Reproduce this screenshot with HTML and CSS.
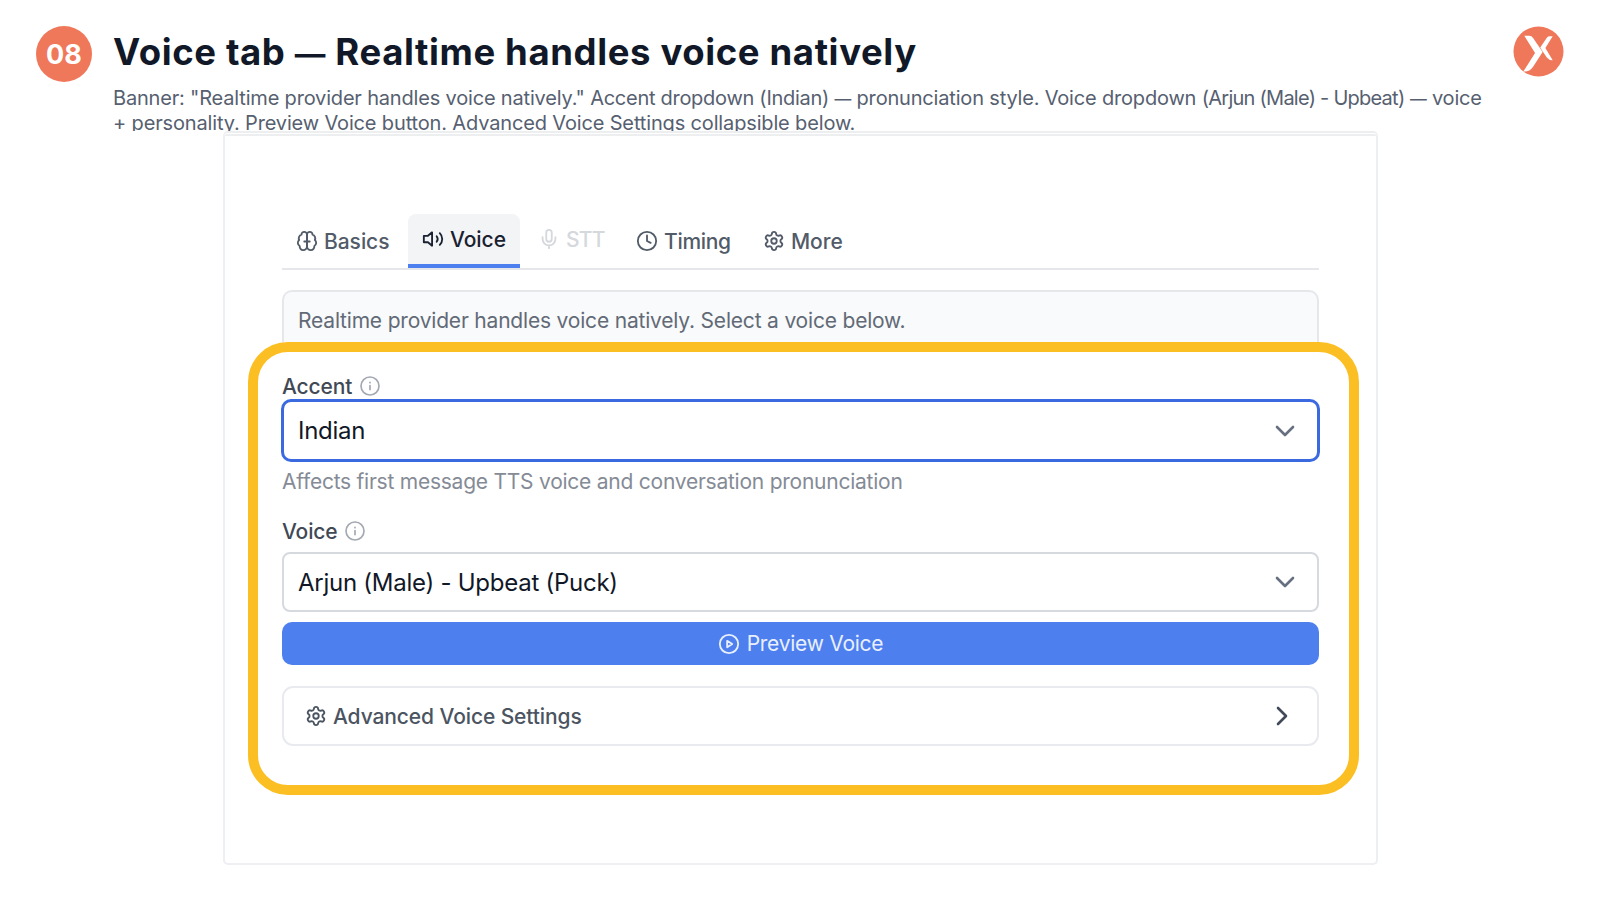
FILE: index.html
```
<!DOCTYPE html>
<html lang="en">

<head>
    <meta charset="UTF-8">
    <meta name="viewport" content="width=device-width, initial-scale=1.0">
    <title>Voice tab</title>
    <link rel="stylesheet" href="styles.css">
</head>

<body>
    <header class="header">
        <div class="step">08</div>
        <div class="heading">
            <h1>Voice tab <span class="dash">—</span> Realtime handles voice natively</h1>
            <p class="subtitle">
                <span class="line">Banner: "Realtime provider handles voice natively." <span class="tight">Accent dropdown (Indian)</span> <span class="dash">—</span> pronunciation style. Voice dropdown <span class="tighter">(Arjun (Male) - Upbeat)</span> <span class="dash">—</span> voice</span>
                <span class="line second">+ personality. Preview Voice button. Advanced Voice Settings collapsible below.</span>
            </p>
        </div>
        <svg class="logo" viewBox="0 0 52 52">
            <circle cx="26" cy="26" r="25.5" fill="#f0785a" />
            <path d="M11.5 10H16.5Q19 10 20.5 12.2L30.2 26.500 20.500 41.5Q17 46.500 12 46.500H10.500L22.500 27.500Z" fill="#fff" />
            <path d="M40.500 10.500H37.500Q35.500 10.500 34.500 12L27.800 22 30 25.500 34.500 32Q37 35 40.500 35L33 22.500Z" fill="#fff" />
        </svg>
    </header>

    <main class="frame">
        <nav class="tabs">
            <a class="tab basics">
                <svg class="icon" viewBox="0 0 24 24">
                    <path d="M12 5a3 3 0 1 0-5.997.125 4 4 0 0 0-2.526 5.770 4 4 0 0 0 .556 6.588A4 4 0 1 0 12 18Z" />
                    <path d="M12 5a3 3 0 1 1 5.997.125 4 4 0 0 1 2.526 5.770 4 4 0 0 1-.556 6.588A4 4 0 1 1 12 18Z" />
                    <path d="M12 5v13M9 12.500h6" />
                </svg>
                <span>Basics</span>
            </a>
            <a class="tab voice active">
                <svg class="icon" viewBox="0 0 24 24">
                    <path d="M11 4.700 6.500 8.500H2v7h4.500L11 19.300Z" />
                    <path d="M16 9a5 5 0 0 1 0 6M19.400 5.600a9 9 0 0 1 0 12.800" />
                </svg>
                <span>Voice</span>
            </a>
            <a class="tab stt disabled">
                <svg class="icon" viewBox="0 0 24 24">
                    <rect x="9" y="2" width="6" height="13" rx="3" />
                    <path d="M19 10v2a7 7 0 0 1-14 0v-2M12 19v3" />
                </svg>
                <span>STT</span>
            </a>
            <a class="tab timing">
                <svg class="icon" viewBox="0 0 24 24">
                    <circle cx="12" cy="12" r="10" />
                    <path d="M12 6v6l4 2" />
                </svg>
                <span>Timing</span>
            </a>
            <a class="tab more">
                <svg class="icon" viewBox="0 0 24 24">
                    <path d="M9.671 4.136a2.340 2.340 0 0 1 4.659 0 2.340 2.340 0 0 0 3.319 1.915 2.340 2.340 0 0 1 2.330 4.033 2.340 2.340 0 0 0 0 3.831 2.340 2.340 0 0 1-2.330 4.033 2.340 2.340 0 0 0-3.319 1.915 2.340 2.340 0 0 1-4.659 0 2.340 2.340 0 0 0-3.320-1.915 2.340 2.340 0 0 1-2.330-4.033 2.340 2.340 0 0 0 0-3.831A2.340 2.340 0 0 1 6.350 6.051a2.340 2.340 0 0 0 3.319-1.915" />
                    <circle cx="12" cy="12" r="3" />
                </svg>
                <span>More</span>
            </a>
        </nav>

        <div class="banner">Realtime provider handles voice natively. Select a voice below.</div>

        <section class="highlight">
            <div class="label">
                <span>Accent</span>
                <svg class="icon info" viewBox="0 0 24 24">
                    <circle cx="12" cy="12" r="10.800" />
                    <path d="M12 11.500v5M12 7.500v.5" />
                </svg>
            </div>
            <div class="select focused">
                <span>Indian</span>
                <svg class="chevron" viewBox="0 0 20 12"><path d="M2 2l8 8 8-8" /></svg>
            </div>
            <p class="help">Affects first message TTS voice and conversation pronunciation</p>

            <div class="label">
                <span>Voice</span>
                <svg class="icon info" viewBox="0 0 24 24">
                    <circle cx="12" cy="12" r="10.800" />
                    <path d="M12 11.500v5M12 7.500v.5" />
                </svg>
            </div>
            <div class="select voice-select">
                <span>Arjun (Male) - Upbeat (Puck)</span>
                <svg class="chevron" viewBox="0 0 20 12"><path d="M2 2l8 8 8-8" /></svg>
            </div>

            <button class="preview">
                <svg class="icon" viewBox="0 0 24 24">
                    <circle cx="12" cy="12" r="10" />
                    <path d="M10 8.500l5.500 3.500-5.500 3.500Z" />
                </svg>
                <span>Preview Voice</span>
            </button>

            <div class="advanced">
                <svg class="icon" viewBox="0 0 24 24">
                    <path d="M9.671 4.136a2.340 2.340 0 0 1 4.659 0 2.340 2.340 0 0 0 3.319 1.915 2.340 2.340 0 0 1 2.330 4.033 2.340 2.340 0 0 0 0 3.831 2.340 2.340 0 0 1-2.330 4.033 2.340 2.340 0 0 0-3.319 1.915 2.340 2.340 0 0 1-4.659 0 2.340 2.340 0 0 0-3.320-1.915 2.340 2.340 0 0 1-2.330-4.033 2.340 2.340 0 0 0 0-3.831A2.340 2.340 0 0 1 6.350 6.051a2.340 2.340 0 0 0 3.319-1.915" />
                    <circle cx="12" cy="12" r="3" />
                </svg>
                <span>Advanced Voice Settings</span>
                <svg class="arrow" viewBox="0 0 12 20"><path d="M2 2l8 8-8 8" /></svg>
            </div>
        </section>
    </main>
</body>

</html>
```
FILE: styles.css
```
* {
    box-sizing: border-box;
}

body {
    margin: 0;
    height: 900px;
    overflow: hidden;
    background-color: #fff;
    font-family: Inter, "Liberation Sans", sans-serif;
    color: #111827;
}

h1,
p {
    margin: 0;
}

.header {
    display: flex;
    height: 131px;
    padding: 26px 36px 0;
    overflow: hidden;
}

.step {
    display: flex;
    flex: none;
    justify-content: center;
    align-items: center;
    width: 56px;
    height: 56px;
    border-radius: 50%;
    background-color: #f0785a;
    color: #fff;
    font-size: 27px;
    font-weight: 700;
}

.heading {
    flex: 1;
    min-width: 0;
    padding-left: 21px;
    white-space: nowrap;
}

h1 {
    height: 60px;
    font-size: 36.5px;
    line-height: 52px;
    font-weight: 700;
    letter-spacing: 0.62px;
}

.dash {
    font-size: 0.84em;
    line-height: 1;
}

.subtitle {
    font-size: 20px;
    line-height: 25px;
    letter-spacing: -0.18px;
    color: #566070;
}

.line {
    display: block;
    height: 25px;
}

.second {
    letter-spacing: -0.15px;
}

.tight {
    letter-spacing: -0.28px;
}

.tighter {
    letter-spacing: -0.75px;
}

.logo {
    flex: none;
    width: 51px;
    height: 51px;
}

/* panel */
.frame {
    width: 1155px;
    height: 734px;
    margin: 0 0 0 223px;
    padding: 78px 24px 0 23px;
    border: 2px solid #eeeff3;
    border-radius: 5px;
    border-top: 5px double #eceef0;
}

.tabs {
    display: flex;
    height: 56px;
    margin: 0 33px 0 34px;
    border-bottom: 2px solid #e5e7eb;
}

.tab {
    display: flex;
    align-items: center;
    height: 54px;
    gap: 6px;
    font-size: 21px;
    font-weight: 500;
    letter-spacing: -0.05px;
    color: #525b68;
}

.icon {
    flex: none;
    width: 22px;
    height: 22px;
    fill: none;
    stroke: currentColor;
    stroke-width: 2;
    stroke-linecap: round;
    stroke-linejoin: round;
}

.basics {
    padding-left: 14px;
    width: 126px;
}

.voice {
    padding-left: 14px;
    width: 112px;
}

.active {
    border-bottom: 4px solid #4d80ee;
    border-radius: 8px 8px 0 0;
    background-color: #f3f4f6;
    color: #1a2130;
}

.stt {
    padding: 0 0 4px 18px;
    width: 116px;
    letter-spacing: -0.8px;
}

.disabled {
    color: #d5d8dc;
}

.timing {
    width: 127px;
    letter-spacing: -0.3px;
}

.banner {
    height: 52px;
    margin: 20px 33px 0 34px;
    padding: 0 14px;
    border: 2px solid #e5e7eb;
    border-bottom: 0;
    border-radius: 10px 10px 0 0;
    background-color: #f9fafb;
    font-size: 21px;
    line-height: 58px;
    letter-spacing: -0.19px;
    color: #626a77;
}

.highlight {
    width: 1111px;
    height: 453px;
    padding: 21px 30px 0 24px;
    border: 10px solid #fbbf24;
    border-radius: 40px;
}

.label {
    display: flex;
    align-items: center;
    gap: 8px;
    height: 26px;
    font-size: 21px;
    font-weight: 500;
    letter-spacing: -0.15px;
    color: #414955;
}

.info {
    width: 20px;
    height: 20px;
    color: #a3a8b2;
}

.select {
    display: flex;
    justify-content: space-between;
    align-items: center;
    height: 60px;
    padding: 0 22px 0 14px;
    border: 2px solid #d6d9de;
    border-radius: 8px;
    font-size: 24px;
    letter-spacing: -0.26px;
}

.focused {
    height: 63px;
    margin: 0 -1px;
    border: 3px solid #3b6ae0;
    border-radius: 10px;
}

.chevron {
    width: 20px;
    height: 12px;
    fill: none;
    stroke: #667080;
    stroke-width: 2.6;
    stroke-linecap: round;
    stroke-linejoin: round;
}

.help {
    height: 56px;
    font-size: 21px;
    line-height: 40px;
    letter-spacing: -0.24px;
    color: #858b96;
}

.voice-select {
    margin-top: 8px;
}

.preview {
    display: flex;
    justify-content: center;
    align-items: center;
    gap: 7px;
    width: 100%;
    height: 43px;
    margin-top: 10px;
    border: none;
    border-radius: 10px;
    background-color: #4d80ee;
    color: #e9effd;
    font-family: inherit;
    font-size: 21px;
    letter-spacing: -0.25px;
}

.advanced {
    display: flex;
    align-items: center;
    gap: 6px;
    height: 60px;
    margin-top: 21px;
    padding: 0 29px 0 21px;
    border: 2px solid #e9eaf0;
    border-radius: 11px;
    font-size: 21px;
    font-weight: 500;
    letter-spacing: -0.1px;
    color: #4b5461;
}

.arrow {
    width: 12px;
    height: 20px;
    margin-left: auto;
    fill: none;
    stroke: #414a58;
    stroke-width: 2.6;
    stroke-linecap: round;
    stroke-linejoin: round;
}
```
